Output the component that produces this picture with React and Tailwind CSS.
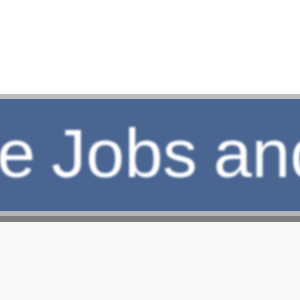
export default function App() {
  return (
    <div className="w-[300px] h-[300px] overflow-hidden bg-white flex flex-col">
      <div className="h-[94px] bg-white shrink-0" />
      <div className="h-[5px] bg-[#bdbdbd] shrink-0" />
      <div className="h-[112px] bg-[#4a6592] shrink-0 overflow-hidden pt-[20px]">
        <div
          className="whitespace-nowrap text-white text-[69px] leading-none ml-[-3px] [word-spacing:-3px] blur-[0.8px]"
          style={{ fontFamily: '"Liberation Sans", Arial, sans-serif' }}
        >
          e Jobs and
        </div>
      </div>
      <div className="h-[5px] bg-[#b3b3b3] shrink-0" />
      <div className="h-[6px] bg-[#808080] shrink-0" />
      <div className="flex-1 bg-[#fafafa]" />
    </div>
  );
}
